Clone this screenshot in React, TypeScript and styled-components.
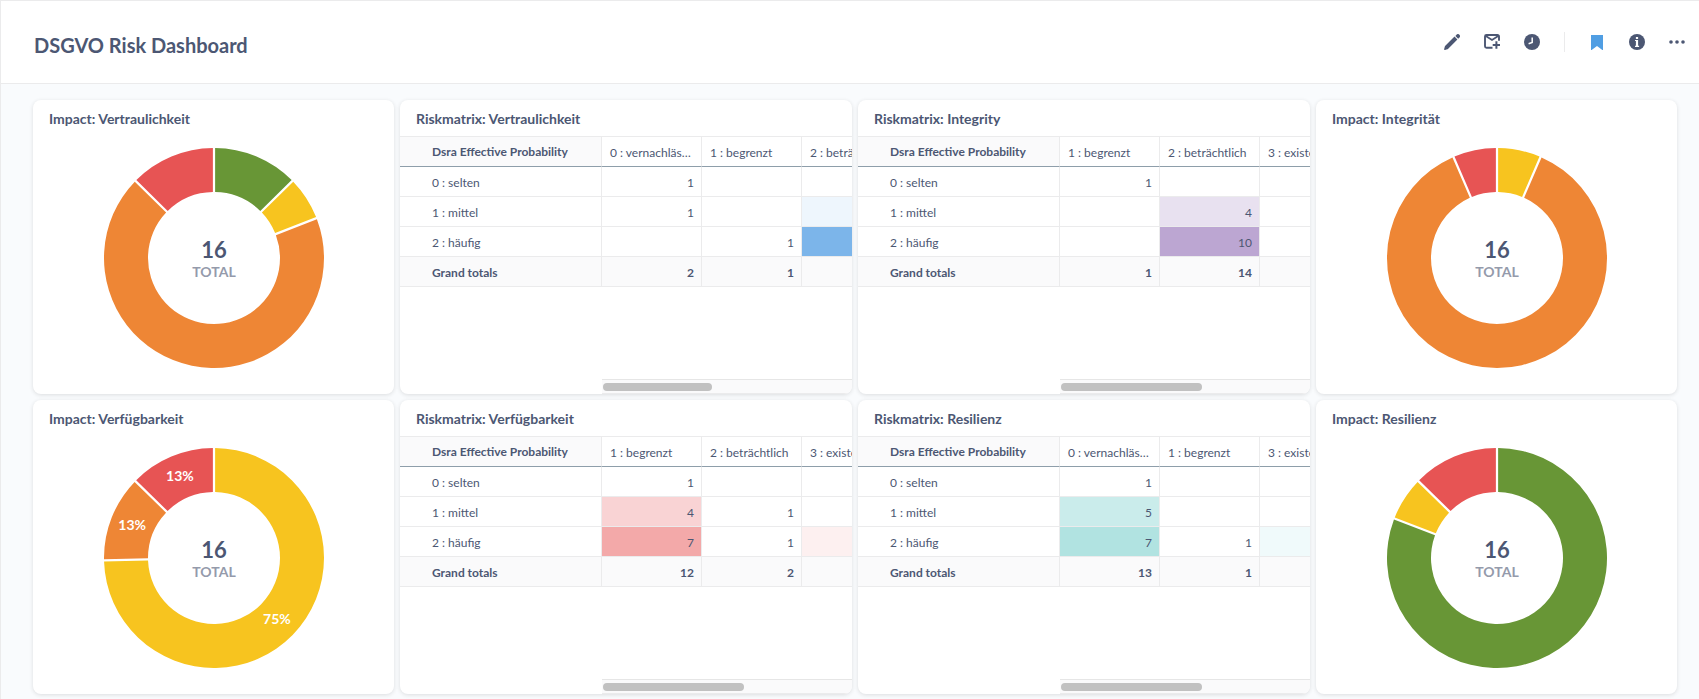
import React from "react";
import styled, { createGlobalStyle, css } from "styled-components";

const color = {
  text: "#4c5773",
  textLight: "#949aab",
  border: "#ebebec",
  headerLine: "#8e9eaa",
  surface: "#fafafb",
  page: "#f9fbfd",
  brand: "#509ee3",
  green: "#689636",
  yellow: "#f7c41f",
  orange: "#ee8635",
  red: "#e75454",
};

const GlobalStyle = createGlobalStyle`
  *, *::before, *::after { box-sizing: border-box; }
  body {
    margin: 0;
    background: ${color.page};
    color: ${color.text};
    font-family: Lato, "Open Sans", sans-serif;
  }
`;

const Page = styled.div`
  min-height: 100vh;
  border-top: 1px solid ${color.border};
  border-left: 1px solid ${color.border};
`;

const Header = styled.header`
  display: flex;
  align-items: center;
  justify-content: space-between;
  height: 83px;
  padding: 0 2px 0 33px;
  background: #fff;
  border-bottom: 1px solid ${color.border};
`;

const PageTitle = styled.h1`
  margin: 0;
  padding-top: 6px;
  font-size: 20px;
  line-height: 24px;
  font-weight: 700;
`;

const Toolbar = styled.div`
  display: flex;
  align-items: center;
`;

const IconButton = styled.button<{ $active?: boolean }>`
  display: flex;
  align-items: center;
  justify-content: center;
  width: 40px;
  height: 40px;
  padding: 0;
  border: 0;
  background: none;
  color: ${(p) => (p.$active ? color.brand : color.text)};
  cursor: pointer;
`;

const ToolbarDivider = styled.span`
  width: 1px;
  height: 20px;
  margin: 0 12px;
  background: ${color.border};
`;

const Grid = styled.main`
  display: grid;
  grid-template-columns: 361fr 452fr 452fr 361fr;
  gap: 6px;
  padding: 16px 22px 5px 32px;
`;

const Card = styled.section`
  display: flex;
  flex-direction: column;
  min-width: 0;
  overflow: hidden;
  background: #fff;
  border-radius: 8px;
  box-shadow: 0 1px 4px rgba(0, 0, 0, 0.12);
`;

const CardTitle = styled.h2`
  margin: 0;
  padding: 9px 16px 7px;
  font-size: 14px;
  line-height: 20px;
  font-weight: 700;
`;

const ChartArea = styled.div`
  display: flex;
  justify-content: center;
  padding: 12px 0 26px;
`;

const ChartSvg = styled.svg`
  display: block;
  width: 220px;
  height: 220px;
  font-family: inherit;
  font-weight: 700;
  text-anchor: middle;
`;

const TotalValue = styled.text`
  fill: ${color.text};
  font-size: 22px;
`;

const TotalLabel = styled.text`
  fill: ${color.textLight};
  font-size: 14px;
`;

const SliceLabel = styled.text`
  fill: #fff;
  font-size: 14px;
`;

const TableViewport = styled.div`
  flex: 1;
  overflow: hidden;
`;

const Matrix = styled.table`
  width: 502px;
  table-layout: fixed;
  border-collapse: separate;
  border-spacing: 0;
  border-top: 1px solid ${color.border};
  font-size: 12px;
  line-height: 16px;
`;

const LabelCol = styled.col`
  width: 202px;
`;

const ValueCol = styled.col`
  width: 100px;
`;

const cell = css`
  height: 30px;
  border-right: 1px solid ${color.border};
  border-bottom: 1px solid ${color.border};
  white-space: nowrap;
  overflow: hidden;
  text-overflow: ellipsis;
`;

const CornerHead = styled.th`
  ${cell}
  padding: 0 8px 0 32px;
  text-align: left;
  background: ${color.surface};
  border-bottom-color: ${color.headerLine};
`;

const ColumnHead = styled.th`
  ${cell}
  padding: 2px 8px 0;
  font-weight: 400;
  text-align: left;
  border-bottom-color: ${color.headerLine};
`;

const RowHead = styled.th<{ $total?: boolean }>`
  ${cell}
  padding: 2px 8px 0 32px;
  text-align: left;
  font-weight: ${(p) => (p.$total ? 700 : 400)};
  background: ${(p) => (p.$total ? color.surface : "#fff")};
`;

const ValueCell = styled.td<{ $fill?: string; $total?: boolean }>`
  ${cell}
  padding: 2px 7px 0;
  text-align: right;
  font-weight: ${(p) => (p.$total ? 700 : 400)};
  background: ${(p) => p.$fill ?? (p.$total ? color.surface : "#fff")};
  background-clip: padding-box;
`;

const ScrollTrack = styled.div`
  height: 15px;
  margin-left: 202px;
  padding: 3px 1px;
  background: ${color.surface};
  border-top: 1px solid #e6e6e6;
  border-bottom: 1px solid ${color.border};
`;

const ScrollThumb = styled.div<{ $share: number }>`
  width: ${(p) => p.$share}%;
  height: 8px;
  border-radius: 4px;
  background: #c1c1c1;
`;

type Slice = { value: number; fill: string };

const PAD = Math.PI / 180;

function polar(radius: number, angle: number) {
  return `${(radius * Math.sin(angle)).toFixed(3)} ${(-radius * Math.cos(angle)).toFixed(3)}`;
}

/* Ring segment whose neighbours are parted by a gap of even width. */
function ringPath(inner: number, outer: number, start: number, end: number) {
  const halfGap = Math.hypot(inner, outer) * Math.sin(PAD / 2);
  const padOuter = Math.asin(halfGap / outer);
  const padInner = Math.asin(halfGap / inner);
  const large = end - start > Math.PI ? 1 : 0;
  return [
    `M${polar(outer, start + padOuter)}`,
    `A${outer} ${outer} 0 ${large} 1 ${polar(outer, end - padOuter)}`,
    `L${polar(inner, end - padInner)}`,
    `A${inner} ${inner} 0 ${large} 0 ${polar(inner, start + padInner)}`,
    "Z",
  ].join("");
}

function Donut({ slices, showLabels }: { slices: Slice[]; showLabels?: boolean }) {
  const total = slices.reduce((sum, s) => sum + s.value, 0);
  const perUnit = (2 * Math.PI - slices.length * PAD) / total;
  let angle = 0;
  const arcs = slices.map((s) => {
    const start = angle;
    angle += s.value * perUnit + PAD;
    return { ...s, start, end: angle, mid: (start + angle) / 2 };
  });
  return (
    <ChartArea>
      <ChartSvg viewBox="-110 -110 220 220" role="img">
        {arcs.map((a) => (
          <path key={a.fill} d={ringPath(66, 110, a.start, a.end)} fill={a.fill} />
        ))}
        {showLabels &&
          arcs.map((a) => (
            <SliceLabel key={a.fill} x={88 * Math.sin(a.mid)} y={-88 * Math.cos(a.mid) + 4}>
              {Math.round((a.value / total) * 100)}%
            </SliceLabel>
          ))}
        <TotalValue y="0">{total}</TotalValue>
        <TotalLabel y="19">TOTAL</TotalLabel>
      </ChartSvg>
    </ChartArea>
  );
}

type MatrixCell = { value?: number; fill?: string };
type MatrixRow = { label: string; total?: boolean; cells: MatrixCell[] };
type MatrixData = { columns: string[]; rows: MatrixRow[]; thumb: number };

function RiskMatrix({ columns, rows, thumb }: MatrixData) {
  return (
    <>
      <TableViewport>
        <Matrix>
          <colgroup>
            <LabelCol />
            {columns.map((c) => (
              <ValueCol key={c} />
            ))}
          </colgroup>
          <thead>
            <tr>
              <CornerHead scope="col">Dsra Effective Probability</CornerHead>
              {columns.map((c) => (
                <ColumnHead key={c} scope="col">
                  {c}
                </ColumnHead>
              ))}
            </tr>
          </thead>
          <tbody>
            {rows.map((r) => (
              <tr key={r.label}>
                <RowHead scope="row" $total={r.total}>
                  {r.label}
                </RowHead>
                {r.cells.map((c, i) => (
                  <ValueCell key={columns[i]} $fill={c.fill} $total={r.total}>
                    {c.value}
                  </ValueCell>
                ))}
              </tr>
            ))}
          </tbody>
        </Matrix>
      </TableViewport>
      <ScrollTrack>
        <ScrollThumb $share={thumb} />
      </ScrollTrack>
    </>
  );
}

const confidentiality: MatrixData = {
  columns: ["0 : vernachlässigbar", "1 : begrenzt", "2 : beträchtlich"],
  thumb: 44,
  rows: [
    { label: "0 : selten", cells: [{ value: 1 }, {}, {}] },
    { label: "1 : mittel", cells: [{ value: 1 }, {}, { fill: "#eef6fd" }] },
    { label: "2 : häufig", cells: [{}, { value: 1 }, { fill: "#7cb5ea" }] },
    { label: "Grand totals", total: true, cells: [{ value: 2 }, { value: 1 }, {}] },
  ],
};

const integrity: MatrixData = {
  columns: ["1 : begrenzt", "2 : beträchtlich", "3 : existenziell"],
  thumb: 57,
  rows: [
    { label: "0 : selten", cells: [{ value: 1 }, {}, {}] },
    { label: "1 : mittel", cells: [{}, { value: 4, fill: "#e8e1f0" }, {}] },
    { label: "2 : häufig", cells: [{}, { value: 10, fill: "#bca6d2" }, {}] },
    { label: "Grand totals", total: true, cells: [{ value: 1 }, { value: 14 }, {}] },
  ],
};

const availability: MatrixData = {
  columns: ["1 : begrenzt", "2 : beträchtlich", "3 : existenziell"],
  thumb: 57,
  rows: [
    { label: "0 : selten", cells: [{ value: 1 }, {}, {}] },
    { label: "1 : mittel", cells: [{ value: 4, fill: "#f9d3d4" }, { value: 1 }, {}] },
    { label: "2 : häufig", cells: [{ value: 7, fill: "#f3a9a9" }, { value: 1 }, { fill: "#fdf0f0" }] },
    { label: "Grand totals", total: true, cells: [{ value: 12 }, { value: 2 }, {}] },
  ],
};

const resilience: MatrixData = {
  columns: ["0 : vernachlässigbar", "1 : begrenzt", "3 : existenziell"],
  thumb: 57,
  rows: [
    { label: "0 : selten", cells: [{ value: 1 }, {}, {}] },
    { label: "1 : mittel", cells: [{ value: 5, fill: "#caeceb" }, {}, {}] },
    { label: "2 : häufig", cells: [{ value: 7, fill: "#b1e3e1" }, { value: 1 }, { fill: "#f0fafb" }] },
    { label: "Grand totals", total: true, cells: [{ value: 13 }, { value: 1 }, {}] },
  ],
};

const PencilIcon = () => (
  <svg width="16" height="16" viewBox="0 0 16 16" fill="currentColor" aria-hidden="true">
    <path d="M12.7.5a1.8 1.8 0 0 1 2.5.1l.3.3a1.8 1.8 0 0 1 0 2.500l-1.300 1.300-2.800-2.800L12.700.5ZM10.500 2.600l2.900 2.900-9.200 9.200c-.3.3-.6.5-1 .6l-2.200.7c-.5.1-1-.3-.9-.8l.6-2.300c.1-.4.3-.8.6-1.100l9.200-9.200Z" />
  </svg>
);

const MailPlusIcon = () => (
  <svg width="16" height="16" viewBox="0 0 16 16" fill="none" stroke="currentColor" aria-hidden="true">
    <path d="M15 6.8V2.500A1.500 1.500 0 0 0 13.500 1h-11A1.500 1.500 0 0 0 1 2.500v9.700a1.500 1.500 0 0 0 1.500 1.500h6" strokeWidth="1.900" />
    <path d="M1.400 1.800 8 6l6.600-4.200" strokeWidth="1.800" />
    <path d="M12.400 7.300v7.500M8.700 11H16" strokeWidth="2" />
  </svg>
);

const ClockIcon = () => (
  <svg width="16" height="16" viewBox="0 0 16 16" aria-hidden="true">
    <circle cx="8" cy="8" r="8" fill="currentColor" />
    <path d="M8.2 3.4v5.1L4.6 9.8" fill="none" stroke="#fff" strokeWidth="1.5" />
  </svg>
);

const BookmarkIcon = () => (
  <svg width="12" height="16" viewBox="0 0 12 16" fill="currentColor" aria-hidden="true">
    <path d="M0 1h12v15.500l-6-4.500-6 4.500Z" />
  </svg>
);

const InfoIcon = () => (
  <svg width="16" height="16" viewBox="0 0 16 16" aria-hidden="true">
    <circle cx="8" cy="8" r="8" fill="currentColor" />
    <path d="M6.9 2.9h2.2v2H6.900ZM6 6h3.100v5.800h1V13H6v-1.200h.9V7.100H6Z" fill="#fff" />
  </svg>
);

const DotsIcon = () => (
  <svg width="16" height="16" viewBox="0 0 16 16" fill="currentColor" aria-hidden="true">
    <circle cx="2" cy="8" r="1.800" />
    <circle cx="8" cy="8" r="1.800" />
    <circle cx="14" cy="8" r="1.800" />
  </svg>
);

export default function App() {
  return (
    <>
      <GlobalStyle />
      <Page>
        <Header>
          <PageTitle>DSGVO Risk Dashboard</PageTitle>
          <Toolbar>
            <IconButton type="button" aria-label="Edit dashboard">
              <PencilIcon />
            </IconButton>
            <IconButton type="button" aria-label="Subscriptions">
              <MailPlusIcon />
            </IconButton>
            <IconButton type="button" aria-label="Auto-refresh">
              <ClockIcon />
            </IconButton>
            <ToolbarDivider />
            <IconButton type="button" aria-label="Bookmark" $active>
              <BookmarkIcon />
            </IconButton>
            <IconButton type="button" aria-label="More info">
              <InfoIcon />
            </IconButton>
            <IconButton type="button" aria-label="More actions">
              <DotsIcon />
            </IconButton>
          </Toolbar>
        </Header>
        <Grid>
          <Card>
            <CardTitle>Impact: Vertraulichkeit</CardTitle>
            <Donut
              slices={[
                { value: 2, fill: color.green },
                { value: 1, fill: color.yellow },
                { value: 11, fill: color.orange },
                { value: 2, fill: color.red },
              ]}
            />
          </Card>
          <Card>
            <CardTitle>Riskmatrix: Vertraulichkeit</CardTitle>
            <RiskMatrix {...confidentiality} />
          </Card>
          <Card>
            <CardTitle>Riskmatrix: Integrity</CardTitle>
            <RiskMatrix {...integrity} />
          </Card>
          <Card>
            <CardTitle>Impact: Integrität</CardTitle>
            <Donut
              slices={[
                { value: 1, fill: color.yellow },
                { value: 14, fill: color.orange },
                { value: 1, fill: color.red },
              ]}
            />
          </Card>
          <Card>
            <CardTitle>Impact: Verfügbarkeit</CardTitle>
            <Donut
              showLabels
              slices={[
                { value: 12, fill: color.yellow },
                { value: 2, fill: color.orange },
                { value: 2, fill: color.red },
              ]}
            />
          </Card>
          <Card>
            <CardTitle>Riskmatrix: Verfügbarkeit</CardTitle>
            <RiskMatrix {...availability} />
          </Card>
          <Card>
            <CardTitle>Riskmatrix: Resilienz</CardTitle>
            <RiskMatrix {...resilience} />
          </Card>
          <Card>
            <CardTitle>Impact: Resilienz</CardTitle>
            <Donut
              slices={[
                { value: 13, fill: color.green },
                { value: 1, fill: color.yellow },
                { value: 2, fill: color.red },
              ]}
            />
          </Card>
        </Grid>
      </Page>
    </>
  );
}
